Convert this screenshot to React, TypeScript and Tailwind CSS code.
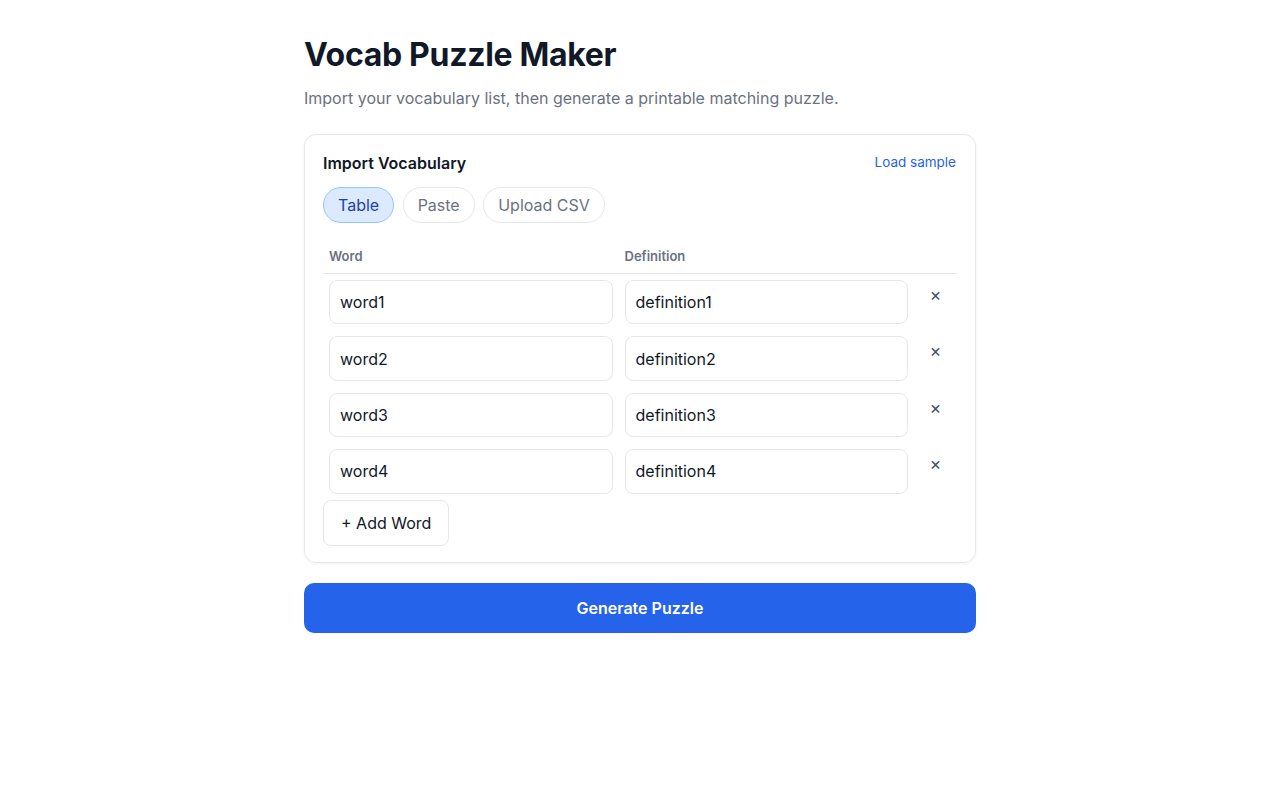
import { useState } from "react";

type Row = { word: string; definition: string };

const INITIAL_ROWS: Row[] = [
  { word: "word1", definition: "definition1" },
  { word: "word2", definition: "definition2" },
  { word: "word3", definition: "definition3" },
  { word: "word4", definition: "definition4" },
];

const TABS = ["Table", "Paste", "Upload CSV"];

export default function App() {
  const [rows, setRows] = useState<Row[]>(INITIAL_ROWS);
  const [tab, setTab] = useState("Table");

  const update = (i: number, key: keyof Row, value: string) =>
    setRows((r) => r.map((row, idx) => (idx === i ? { ...row, [key]: value } : row)));

  return (
    <div className="min-h-screen bg-white font-['Inter',sans-serif] text-gray-900">
      <main className="max-w-[672px] mx-auto pt-[35px] pb-10">
        <h1 className="text-[32px] leading-10 font-bold tracking-[-0.01em] text-[#111827]">
          Vocab Puzzle Maker
        </h1>
        <p className="mt-[11px] text-base leading-6 text-gray-500">
          Import your vocabulary list, then generate a printable matching puzzle.
        </p>

        <section className="mt-[24px] rounded-xl border border-gray-200 shadow-[0_1px_3px_rgba(0,0,0,0.05)] px-[18px] pt-[18px] pb-4">
          <div className="flex items-start justify-between">
            <h2 className="text-base leading-5 font-semibold">Import Vocabulary</h2>
            <button className="text-[13.5px] leading-5 text-[#2563eb] mr-px -mt-px">Load sample</button>
          </div>

          <div className="mt-[14px] flex gap-[8.5px]">
            {TABS.map((name) => (
              <button
                key={name}
                onClick={() => setTab(name)}
                className={`h-9 px-[14px] rounded-full border text-[16px] ${
                  tab === name
                    ? "bg-[#dbeafe] border-[#93c5fd] text-[#1e40af]"
                    : "bg-white border-gray-200 text-gray-500"
                }`}
              >
                {name}
              </button>
            ))}
          </div>

          <table className="mt-[17px] w-full border-collapse">
            <thead>
              <tr className="border-b border-gray-200">
                <th className="text-left text-[13px] leading-[17px] font-semibold text-gray-500 px-1.5 py-2">Word</th>
                <th className="text-left text-[13px] leading-[17px] font-semibold text-gray-500 px-1.5 py-2">Definition</th>
                <th className="w-[43px]" />
              </tr>
            </thead>
            <tbody>
              {rows.map((row, i) => (
                <tr key={i}>
                  <td className="p-1.5">
                    <input
                      value={row.word}
                      onChange={(e) => update(i, "word", e.target.value)}
                      className="w-full h-[44.4px] rounded-lg border border-gray-200 px-[10px] text-base text-gray-900 outline-none"
                    />
                  </td>
                  <td className="p-1.5">
                    <input
                      value={row.definition}
                      onChange={(e) => update(i, "definition", e.target.value)}
                      className="w-full h-[44.4px] rounded-lg border border-gray-200 px-[10px] text-base text-gray-900 outline-none"
                    />
                  </td>
                  <td className="p-1.5 align-top text-center">
                    <button
                      onClick={() => setRows((r) => r.filter((_, idx) => idx !== i))}
                      className="mt-[5px] text-lg leading-5 text-gray-600"
                    >
                      ×
                    </button>
                  </td>
                </tr>
              ))}
            </tbody>
          </table>

          <button
            onClick={() => setRows((r) => [...r, { word: "", definition: "" }])}
            className="h-[46px] px-[17px] rounded-lg border border-gray-200 text-base text-gray-900"
          >
            + Add Word
          </button>
        </section>

        <button className="mt-5 w-full h-[50px] rounded-[10px] bg-[#2563eb] text-white text-base font-semibold">
          Generate Puzzle
        </button>
      </main>
    </div>
  );
}
